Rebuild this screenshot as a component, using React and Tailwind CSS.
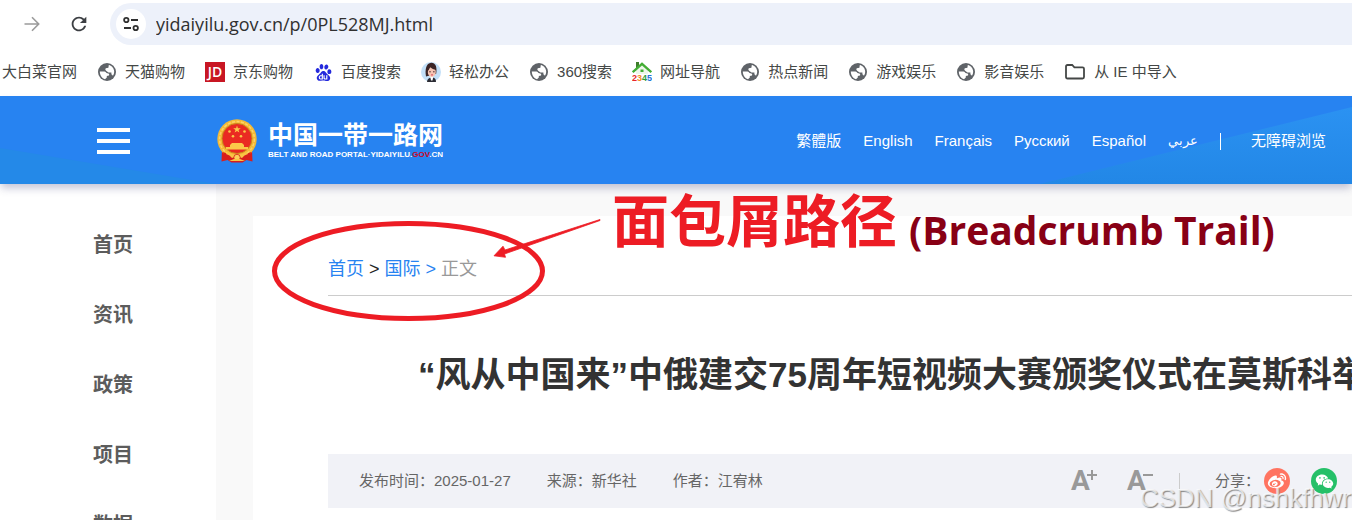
import React, { useState } from "react";
import { MdRefresh } from "react-icons/md";
import { SiBaidu } from "react-icons/si";
import { RiWeiboFill, RiWechatFill } from "react-icons/ri";

const bookmarks = [
  { name: "大白菜官网" },
  { name: "天猫购物", icon: "globe" },
  { name: "京东购物", icon: "jd" },
  { name: "百度搜索", icon: "baidu" },
  { name: "轻松办公", icon: "avatar" },
  { name: "360搜索", icon: "globe" },
  { name: "网址导航", icon: "house" },
  { name: "热点新闻", icon: "globe" },
  { name: "游戏娱乐", icon: "globe" },
  { name: "影音娱乐", icon: "globe" },
  { name: "从 IE 中导入", icon: "folder" },
];

const languages = ["繁體版", "English", "Français", "Русский", "Español"];

const menus = ["首页", "资讯", "政策", "项目", "数据"];

const GlobeIcon = () => (
  <svg className="size-[18px]" viewBox="0 0 18 18">
    <circle cx="9" cy="9" r="9" fill="#5f6368" />
    <path
      d="M1.800 8.600h4.600c1.400 0 1.500 1.700 3 1.700 1.600 0 2.200 1 1.600 2.300l-2.200.4v1.600L7 16.300C4 15.500 1.900 12.700 1.800 8.600zM10.800 2.100c3.200.7 5.300 3.500 5.400 6.700 0 1.500-.4 2.800-1.200 4l-1.600-1.500V9.400h-2.900L8.400 8.100 7.300 6.800l.4-1.600 2.700-.4z"
      fill="#fff"
    />
  </svg>
);

const AvatarIcon = () => (
  <svg className="size-5" viewBox="0 0 20 20">
    <circle cx="10" cy="10" r="10" fill="#c3e0f8" />
    <path d="M5 14.500C3.800 8 5 1 10.300.8c5 0 5.700 5.200 4.900 11z" fill="#3b2526" />
    <path d="M6 20c0-3 2-4.500 5-4.500s4 1.500 4 4.500z" fill="#2b2b33" />
    <path d="M9 14h3.500l-1 4.500H10z" fill="#fff" />
    <ellipse cx="10.800" cy="10" rx="4" ry="4.900" fill="#f6c4b2" />
    <path d="M6 10c1-1 2.500-3 3-5 1.500 1.500 4 2.500 6 3C14.500 4 12.500 2.500 10 2.500S6 5 6 10z" fill="#3b2526" />
    <path d="M8.200 9.800h1.600M12 9.800h1.600" stroke="#4a2f2f" />
    <path d="M10 12.900h2" stroke="#d8465a" />
  </svg>
);

const HouseIcon = () => (
  <svg className="size-5" viewBox="0 0 20 20">
    <path d="M4 0h3v6H4z" fill="#3f7d2c" />
    <path d="M4 8l6-5 6 5v4H4z" fill="#eef6ea" />
    <path d="M.7 10.200L10 1.800l9.300 8.400" fill="none" stroke="#43ad35" strokeWidth="2.400" />
    <path d="M8.500 7.500h3V10h-3z" fill="#43ad35" />
    <g fontFamily="Liberation Sans" fontWeight="700" fontSize="9">
      <text x="0" y="19" fill="#e8262b">2</text>
      <text x="5" y="19" fill="#f58b1f">3</text>
      <text x="10" y="19" fill="#2f9e3a">4</text>
      <text x="15" y="19" fill="#2473d6">5</text>
    </g>
  </svg>
);

const FolderIcon = () => (
  <svg className="size-[22px]" viewBox="0 0 22 22" fill="none" stroke="#444746" strokeWidth="1.800">
    <path d="M2 5.500Q2 4 3.500 4h4.700l2.200 2.300h8.100Q20 6.300 20 7.800V16q0 1.500-1.500 1.500h-15Q2 17.500 2 16z" />
  </svg>
);

function BookmarkIcon({ type }) {
  if (type === "globe") return <GlobeIcon />;
  if (type === "avatar") return <AvatarIcon />;
  if (type === "house") return <HouseIcon />;
  if (type === "folder") return <FolderIcon />;
  if (type === "baidu") return <SiBaidu className="size-[17px] text-[#2429dc]" />;
  return (
    <span className="flex size-5 items-center justify-center bg-[#c81623] font-['Open_Sans'] text-sm font-semibold text-white">
      JD
    </span>
  );
}

const Emblem = () => (
  <svg className="h-11 w-10" viewBox="0 0 40 44">
    <path d="M5 31l-.500 11.500 6-1.500 4 2.500h11l4-2.500 6 1.500L35 31z" fill="#d81e1c" />
    <circle cx="20" cy="20" r="19.700" fill="#f5b935" />
    <circle cx="20" cy="20" r="17.400" fill="none" stroke="#fbd368" strokeWidth="1.500" strokeDasharray="3 1.500" />
    <circle cx="20" cy="19.500" r="15" fill="#ea2a22" stroke="#c98a1c" />
    <path d="M20 6.500l.9 2.700h2.900l-2.300 1.700.9 2.700-2.400-1.700-2.400 1.700.9-2.700-2.300-1.700h2.900z" fill="#fbc94a" />
    <g fill="#fbc94a">
      <circle cx="12.500" cy="12.500" r="1.300" />
      <circle cx="27.500" cy="12.500" r="1.300" />
      <circle cx="16" cy="17.300" r="1.300" />
      <circle cx="24" cy="17.300" r="1.300" />
      <path d="M15 24h10l2 2v2h4v2.500H9V28h4v-2z" />
    </g>
    <path d="M6 33c4 2 8 3 14 3s10-1 14-3l-1 5c-3-1-6 1-8 3H15c-2-2-5-4-8-3z" fill="#d81e1c" />
    <path d="M10 33q10 5 20 0l1 2q-4 1-6 4l-5-2-5 2q-2-3-6-4z" fill="#f9c445" />
    <circle cx="20" cy="38.500" r="3.200" fill="#fbd05a" stroke="#d81e1c" strokeWidth=".8" />
    <path d="M12 42l5-2h6l5 2z" fill="#f9c445" />
  </svg>
);

// Browser toolbar with the address field
function Toolbar() {
  const [url, setUrl] = useState("yidaiyilu.gov.cn/p/0PL528MJ.html");

  return (
    <div className="flex h-12 items-center pl-6">
      <button aria-label="Forward" className="mr-7">
        <svg className="size-4" viewBox="0 0 16 16" fill="none" stroke="#9b9b9b" strokeWidth="1.600">
          <path d="M.5 8h14M8 1.300L14.700 8 8 14.700" />
        </svg>
      </button>
      <button aria-label="Reload" className="mr-5">
        <MdRefresh className="size-[22px] text-[#3c3f43]" />
      </button>
      <div className="flex h-[42px] flex-1 items-center rounded-l-full bg-[#edf1fa] pl-[6px]">
        <button aria-label="Site information" className="flex size-[30px] items-center justify-center rounded-full bg-white">
          <svg className="size-4" viewBox="0 0 16 16" fill="none" stroke="#303030" strokeWidth="1.800">
            <circle cx="3.300" cy="4" r="2.200" />
            <path d="M8 4h7M1 12h7" />
            <circle cx="12.700" cy="12" r="2.200" />
          </svg>
        </button>
        <input
          aria-label="Address"
          value={url}
          onChange={(e) => setUrl(e.target.value)}
          className="ml-[10px] flex-1 bg-transparent font-['Open_Sans',sans-serif] text-lg text-[#303030] outline-none"
        />
      </div>
    </div>
  );
}

function Bookmarks() {
  return (
    <nav className="flex h-12 items-center gap-5 pl-[2px] text-[15px] whitespace-nowrap text-[#444746]">
      {bookmarks.map((item) => (
        <a key={item.name} href="#" className="flex items-center gap-2">
          {item.icon && (
            <span className="flex min-w-5 items-center justify-center">
              <BookmarkIcon type={item.icon} />
            </span>
          )}
          {item.name}
        </a>
      ))}
    </nav>
  );
}

function Header() {
  return (
    <header className="relative z-10 flex h-[88px] items-center bg-[#2783f1] pt-[2px] pr-[26px] pl-[97px] text-white shadow-[0_5px_8px_-1px_rgba(60,60,120,0.3)]">
      {/* Background wedges */}
      <div className="absolute bottom-0 left-0 h-9 w-[216px] bg-[#2489e8] [clip-path:polygon(0_0,100%_100%,0_100%)]" />
      <div className="absolute right-0 bottom-0 h-[77px] w-[312px] bg-linear-to-t from-[#2287e6] to-[#2b92f2] [clip-path:polygon(100%_0,100%_100%,0_100%)]" />

      <button aria-label="菜单" className="relative flex w-[33px] flex-col gap-[7px]">
        <span className="h-1 bg-white" />
        <span className="h-1 bg-white" />
        <span className="h-1 bg-white" />
      </button>

      <a href="#" className="relative ml-[87px] flex items-center gap-[11px]">
        <Emblem />
        <span className="flex flex-col whitespace-nowrap">
          <span className="text-[25px] leading-7 font-bold">中国一带一路网</span>
          <span className="text-[8px] leading-3 font-bold">
            BELT AND ROAD PORTAL·YIDAIYILU.<span className="text-[#d0021b]">GOV</span>.CN
          </span>
        </span>
      </a>

      <nav className="relative ml-auto flex items-center gap-[22px] text-[15px] whitespace-nowrap">
        {languages.map((lang) => (
          <a key={lang} href="#">
            {lang}
          </a>
        ))}
        <a href="#" lang="ar" className="text-[13px]">
          عربي
        </a>
        <span className="h-[17px] w-px bg-white" />
        <a href="#" className="ml-2">
          无障碍浏览
        </a>
      </nav>
    </header>
  );
}

function Sidebar() {
  return (
    <nav className="w-[216px] shrink-0 bg-white pt-[26px] text-xl font-bold text-[#5c5c5c]">
      {menus.map((menu) => (
        <a key={menu} href="#" className="flex h-[70px] items-center pl-[93px]">
          {menu}
        </a>
      ))}
    </nav>
  );
}

function ArticleMeta() {
  return (
    <div className="flex h-[54px] items-center bg-[#f1f2f7] pr-[15px] pl-[31px] text-[15px] whitespace-nowrap text-[#666]">
      <div className="flex gap-9">
        <span>发布时间：2025-01-27</span>
        <span>来源：新华社</span>
        <span>作者：江宥林</span>
      </div>
      <div className="ml-auto flex items-center">
        <button aria-label="放大字号" className="flex w-14 text-[#999]">
          <span className="font-['Roboto'] text-[28px] leading-8 font-bold">A</span>
          <svg className="-ml-1 size-3 mt-1" viewBox="0 0 12 12" stroke="#999" strokeWidth="2">
            <path d="M1 6h10M6 1v10" />
          </svg>
        </button>
        <button aria-label="缩小字号" className="flex w-[52px] text-[#999]">
          <span className="font-['Roboto'] text-[28px] leading-8 font-bold">A</span>
          <svg className="-ml-1 size-3 mt-1" viewBox="0 0 12 12" stroke="#999" strokeWidth="2">
            <path d="M1 6h10" />
          </svg>
        </button>
        <span className="mr-[35px] h-4 w-px bg-[#ccc]" />
        <span>分享：</span>
        <a href="#" aria-label="微博" className="ml-1 flex size-[26px] items-center justify-center rounded-full bg-[#ff7461] text-white">
          <RiWeiboFill className="size-5" />
        </a>
        <a href="#" aria-label="微信" className="ml-[21px] flex size-[26px] items-center justify-center rounded-full bg-[#25c068] text-white">
          <RiWechatFill className="size-[19px]" />
        </a>
      </div>
    </div>
  );
}

// Hand-drawn marks laid over the article
function Annotation() {
  return (
    <div className="pointer-events-none absolute top-0 left-0">
      <svg className="absolute top-[34px] left-[54px] h-[106px] w-[332px]" viewBox="0 0 332 106">
        <ellipse cx="138.500" cy="53" rx="134" ry="47.500" fill="none" stroke="#ed1c24" strokeWidth="5" />
        <path d="M330 1.500L235 32l-2-3.800L224 37.800l11.500 1.500-1-3.300L330 2.500z" fill="#ed1c24" stroke="#ed1c24" strokeWidth=".8" />
      </svg>
      <p className="absolute top-0 left-[396px] flex items-end gap-3 whitespace-nowrap">
        <span className="text-[57px] leading-[76px] font-bold text-[#ed1c24]">面包屑路径</span>
        <span className="font-['Open_Sans',sans-serif] text-[39px] leading-[60px] font-bold text-[#880015]">(Breadcrumb Trail)</span>
      </p>
    </div>
  );
}

function App() {
  return (
    <div className="relative flex h-screen flex-col overflow-hidden bg-white font-['Liberation_Sans','Noto_Sans_CJK_SC',sans-serif]">
      <Toolbar />
      <Bookmarks />
      <Header />

      <div className="flex min-h-0 flex-1">
        <Sidebar />

        <main className="relative min-w-0 flex-1 bg-[#f9f9f9] pt-8 pl-[37px]">
          <article className="h-full overflow-hidden bg-white pl-[75px]">
            {/* Breadcrumb */}
            <nav className="flex h-20 items-center gap-[5px] border-b border-[#ccc] pt-[26px] text-lg text-[#2783f1]">
              <a href="#">首页</a>
              <span className="text-[#222]">&gt;</span>
              <a href="#">国际</a>
              <span>&gt;</span>
              <span className="text-[#999]">正文</span>
            </nav>

            <h1 className="pt-[53px] pb-[53px] pl-[90px] text-[35px] leading-[52px] font-bold whitespace-nowrap text-[#333]">
              “风从中国来”中俄建交75周年短视频大赛颁奖仪式在莫斯科举行
            </h1>

            <ArticleMeta />
          </article>

          <Annotation />
        </main>
      </div>

      <p className="pointer-events-none absolute right-px bottom-2 text-[26px] leading-7 text-white/70 [text-shadow:1px_1px_1px_#888]">
        CSDN @nshkfhwr
      </p>
    </div>
  );
}

export default App;
